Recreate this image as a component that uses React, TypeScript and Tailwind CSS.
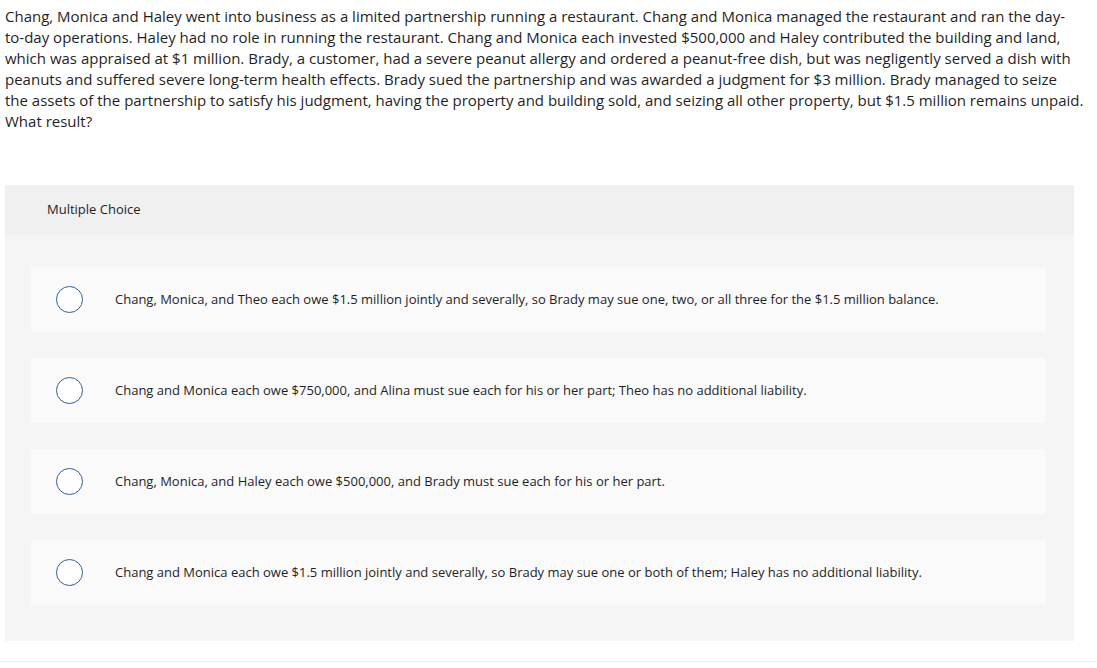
const lines = [
  'Chang, Monica and Haley went into business as a limited partnership running a restaurant. Chang and Monica managed the restaurant and ran the day-',
  'to-day operations. Haley had no role in running the restaurant. Chang and Monica each invested $500,000 and Haley contributed the building and land,',
  'which was appraised at $1 million. Brady, a customer, had a severe peanut allergy and ordered a peanut-free dish, but was negligently served a dish with',
  'peanuts and suffered severe long-term health effects. Brady sued the partnership and was awarded a judgment for $3 million. Brady managed to seize',
  'the assets of the partnership to satisfy his judgment, having the property and building sold, and seizing all other property, but $1.5 million remains unpaid.',
  'What result?',
];

const options = [
  'Chang, Monica, and Theo each owe $1.5 million jointly and severally, so Brady may sue one, two, or all three for the $1.5 million balance.',
  'Chang and Monica each owe $750,000, and Alina must sue each for his or her part; Theo has no additional liability.',
  'Chang, Monica, and Haley each owe $500,000, and Brady must sue each for his or her part.',
  'Chang and Monica each owe $1.5 million jointly and severally, so Brady may sue one or both of them; Haley has no additional liability.',
];

export default function App() {
  return (
    <div className="w-[1097px] h-[668px] bg-white overflow-hidden text-[#1f1f1f] font-['Open_Sans',sans-serif]">
      {/* Question */}
      <div className="pl-[5px] pt-[6px] text-[15px] leading-[21px] whitespace-nowrap">
        {lines.map((l) => (
          <div key={l}>{l}</div>
        ))}
      </div>

      {/* Answer panel */}
      <div className="mt-[53px] ml-[5px] w-[1069px] bg-[#f5f5f5]">
        <div className="h-[50px] bg-[#f0f0f0] flex items-center pl-[42px] text-[13px]">
          Multiple Choice
        </div>
        <div className="pt-[32px] pb-[36px] pl-[26px] pr-[28px] flex flex-col gap-[26px]">
          {options.map((opt) => (
            <div key={opt} className="h-[65px] bg-[#fafafa] rounded-[3px] flex items-center pl-[25px]">
              <div className="w-[27px] h-[27px] rounded-full border-[1.5px] border-[#2d5f9a] bg-white shrink-0" />
              <span className="ml-[32px] text-[13px]">{opt}</span>
            </div>
          ))}
        </div>
      </div>

      <div className="mt-[20px] h-px bg-[#ececec]" />
    </div>
  );
}
